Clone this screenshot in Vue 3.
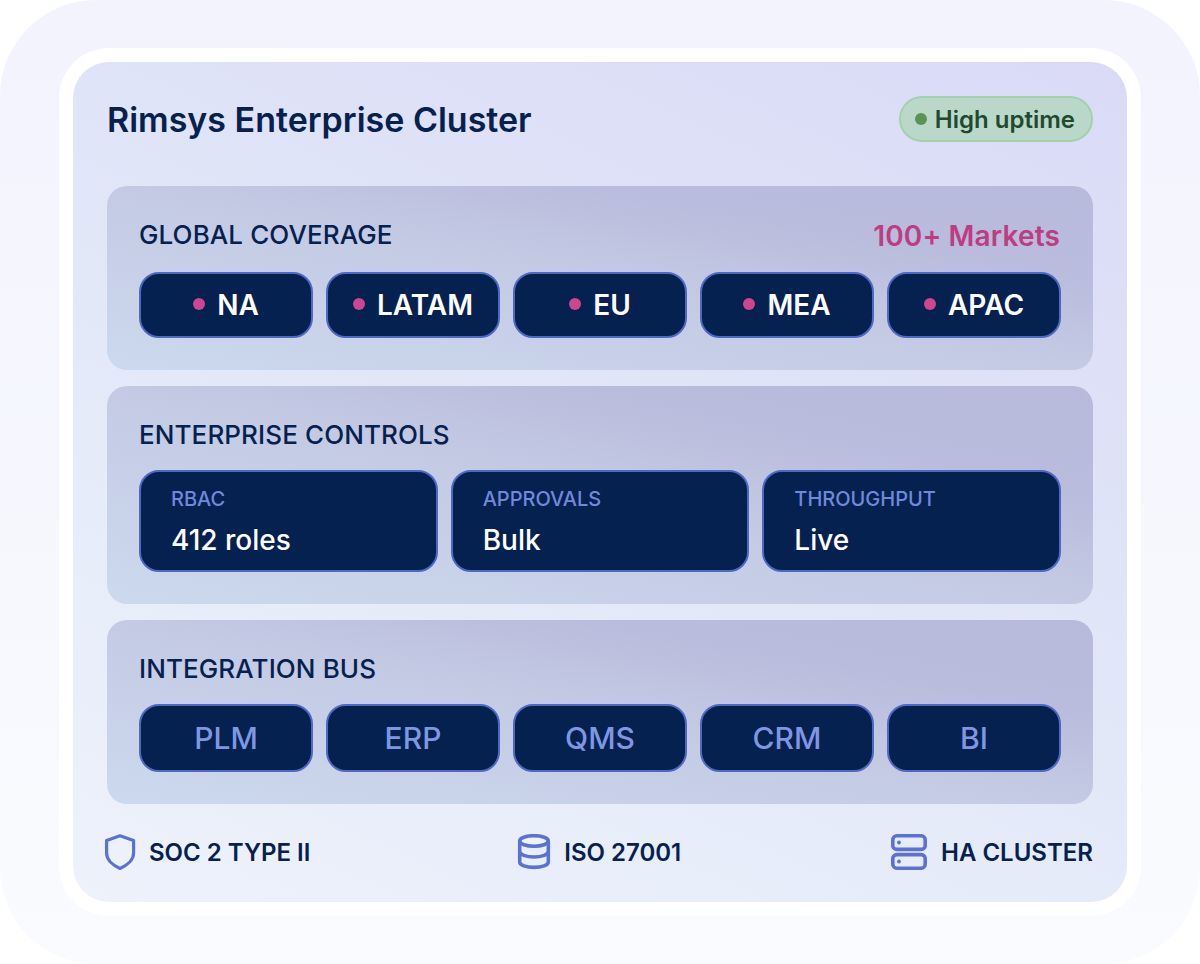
<template>
  <div class="frame">
    <div class="card">
      <div class="inner">
        <header class="top">
          <h1>Rimsys Enterprise Cluster</h1>
          <span class="uptime"><i class="uptime-dot"></i>High uptime</span>
        </header>

        <section class="panel panel-first">
          <div class="panel-head">
            <h2>GLOBAL COVERAGE</h2>
            <span class="markets">100+ Markets</span>
          </div>
          <div class="row-five">
            <div v-for="region in regions" :key="region" class="chip">
              <i class="chip-dot"></i>{{ region }}
            </div>
          </div>
        </section>

        <section class="panel">
          <h2 class="panel-title">ENTERPRISE CONTROLS</h2>
          <div class="row-three">
            <div v-for="item in controls" :key="item.label" class="control">
              <span class="control-label">{{ item.label }}</span>
              <span class="control-value">{{ item.value }}</span>
            </div>
          </div>
        </section>

        <section class="panel">
          <h2 class="panel-title">INTEGRATION BUS</h2>
          <div class="row-five">
            <div v-for="system in systems" :key="system" class="chip chip-bus">{{ system }}</div>
          </div>
        </section>

        <footer class="badges">
          <div class="badge">
            <svg class="icon" viewBox="0 0 36 36" fill="none" stroke="#5a72d6" stroke-width="3.2" stroke-linejoin="round">
              <path d="M19 1.8 L32.6 6.6 V19 C32.6 26 26 31.5 19 34.4 C12 31.5 5.6 26 5.6 19 V6.6 Z" />
            </svg>
            SOC 2 TYPE II
          </div>
          <div class="badge badge-mid">
            <svg class="icon" viewBox="0 0 36 36" fill="none" stroke="#5a72d6" stroke-width="3.6">
              <ellipse cx="18" cy="7" rx="14.3" ry="5.3" fill="#eef1fb" />
              <path d="M3.7 7 V28 C3.7 31 10 33.4 18 33.4 C26 33.4 32.3 31 32.3 28 V7" />
              <path d="M3.7 17.5 C3.7 20.5 10 23 18 23 C26 23 32.3 20.5 32.3 17.5" />
            </svg>
            ISO 27001
          </div>
          <div class="badge badge-last">
            <svg class="icon" viewBox="0 0 36 36" fill="none" stroke="#5a72d6" stroke-width="3.6">
              <rect x="1.8" y="1.8" width="32.4" height="13.6" rx="4" />
              <rect x="1.8" y="20.6" width="32.4" height="13.6" rx="4" />
              <circle cx="8" cy="8.5" r="1.9" fill="#5a72d6" stroke="none" />
              <circle cx="8" cy="27.5" r="1.9" fill="#5a72d6" stroke="none" />
            </svg>
            HA CLUSTER
          </div>
        </footer>
      </div>
    </div>
  </div>
</template>

<script setup>
const regions = ['NA', 'LATAM', 'EU', 'MEA', 'APAC']
const systems = ['PLM', 'ERP', 'QMS', 'CRM', 'BI']
const controls = [
  { label: 'RBAC', value: '412 roles' },
  { label: 'APPROVALS', value: 'Bulk' },
  { label: 'THROUGHPUT', value: 'Live' },
]
</script>

<style scoped>
.frame {
  width: 1200px;
  height: 964px;
  box-sizing: border-box;
  padding: 48px 59px;
  border-radius: 96px;
  background: linear-gradient(180deg, #f2f3fd 0%, #f9fbfe 100%);
  font-family: Inter, sans-serif;
  color: #05214f;
}

.card {
  height: 868px;
  box-sizing: border-box;
  padding: 14px;
  border-radius: 50px;
  background: #fff;
}

.inner {
  height: 840px;
  box-sizing: border-box;
  padding: 34px 34px 0;
  border-radius: 36px;
  background: linear-gradient(205deg, #dadaf7 0%, #dfe3f7 35%, #e5ebf9 65%, #edf2fb 100%);
}

.top {
  display: flex;
  justify-content: space-between;
  align-items: center;
  height: 46px;
  margin-bottom: 44px;
}

h1 {
  margin: 0;
  font-size: 34px;
  font-weight: 600;
  color: #05214f;
}

.uptime {
  display: flex;
  align-items: center;
  gap: 8px;
  box-sizing: border-box;
  height: 46px;
  padding: 0 16px 0 14px;
  border: 2px solid #a3d1ab;
  border-radius: 23px;
  background: #bad8ca;
  color: #24482f;
  font-size: 24px;
  font-weight: 600;
}

.uptime-dot {
  width: 12px;
  height: 12px;
  border-radius: 50%;
  background: #5a9452;
}

.panel {
  box-sizing: border-box;
  margin-bottom: 16px;
  padding: 32px;
  border-radius: 20px;
  background: linear-gradient(to bottom left, #b7badb 0%, #b9bcdc 25%, #c4cae4 50%, #ccd9ee 100%);
}

.panel-first {
  padding-top: 30px;
}

.panel-head {
  display: flex;
  justify-content: space-between;
  align-items: center;
  height: 40px;
  margin-bottom: 16px;
}

h2 {
  margin: 0;
  font-size: 26px;
  font-weight: 500;
  letter-spacing: 0.1px;
  color: #05214f;
}

.panel-head h2 {
  margin-top: -3px;
}

.panel-title {
  height: 36px;
  line-height: 34px;
  margin-bottom: 16px;
}

.markets {
  font-size: 28px;
  font-weight: 600;
  letter-spacing: 0.15px;
  color: #bd3d84;
  margin-right: 1px;
}

.row-five {
  display: grid;
  grid-template-columns: repeat(5, 1fr);
  gap: 13px;
}

.row-three {
  display: grid;
  grid-template-columns: repeat(3, 1fr);
  gap: 13px;
}

.chip {
  display: flex;
  align-items: center;
  justify-content: center;
  gap: 12px;
  box-sizing: border-box;
  height: 66px;
  border: 2px solid #4f68c4;
  border-radius: 20px;
  background: #05214f;
  color: #fff;
  font-size: 28px;
  font-weight: 600;
}

.chip-bus {
  height: 68px;
  color: #7f97e3;
  font-size: 30px;
  font-weight: 500;
}

.chip-dot {
  width: 12px;
  height: 12px;
  border-radius: 50%;
  background: #cf4592;
  margin-top: -2px;
}

.control {
  display: flex;
  flex-direction: column;
  gap: 12px;
  box-sizing: border-box;
  height: 102px;
  padding: 15px 30px;
  border: 2px solid #4f68c4;
  border-radius: 20px;
  background: #05214f;
}

.control-label {
  font-size: 20px;
  font-weight: 500;
  color: #7189dc;
}

.control-value {
  font-size: 28px;
  font-weight: 500;
  color: #fff;
}

.badges {
  display: flex;
  justify-content: space-between;
  align-items: center;
  height: 66px;
  margin-top: -1px;
  margin-left: -6px;
}

.badge {
  display: flex;
  align-items: center;
  gap: 12px;
  font-size: 24px;
  font-weight: 600;
  color: #05214f;
}

.badge-mid {
  margin-right: 4px;
}

.badge-last {
  gap: 14px;
}

.icon {
  width: 36px;
  height: 36px;
}
</style>

<style>
html,
body {
  background: #fff;
}
</style>
